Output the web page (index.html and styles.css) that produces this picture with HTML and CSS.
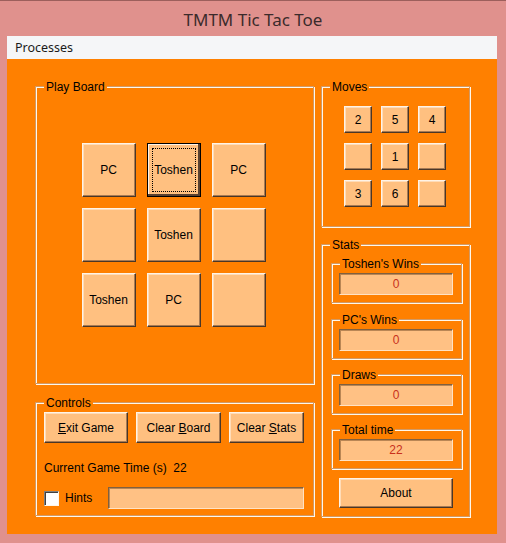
FILE: index.html
```html
<!DOCTYPE html>
<html lang="en">
<head>
<meta charset="utf-8">
<title>TMTM Tic Tac Toe</title>
<link rel="stylesheet" href="styles.css">
</head>
<body>
<div class="window">
  <div class="titlebar">TMTM Tic Tac Toe</div>
  <div class="frame">
    <div class="menubar"><span class="menu-item">Processes</span></div>
    <div class="client">
      <div class="col col-left">
        <div class="group board-group">
          <span class="group-label">Play Board</span>
          <div class="group-body centered">
            <div class="board">
              <button class="btn cell">PC</button>
              <button class="btn cell focused"><span class="focus-rect">Toshen</span></button>
              <button class="btn cell">PC</button>
              <button class="btn cell"></button>
              <button class="btn cell">Toshen</button>
              <button class="btn cell"></button>
              <button class="btn cell">Toshen</button>
              <button class="btn cell">PC</button>
              <button class="btn cell"></button>
            </div>
          </div>
        </div>
        <div class="group controls-group">
          <span class="group-label">Controls</span>
          <div class="controls">
            <div class="control-buttons">
              <button class="btn ctl ctl-exit"><span><u>E</u>xit Game</span></button>
              <button class="btn ctl ctl-board"><span>Clear <u>B</u>oard</span></button>
              <button class="btn ctl ctl-stats"><span>Clear <u>S</u>tats</span></button>
            </div>
            <div class="game-time">Current Game Time (s)&nbsp; 22</div>
            <div class="hints-row">
              <span class="checkbox"></span>
              <span class="hints-label">Hints</span>
              <div class="field hint-field"></div>
            </div>
          </div>
        </div>
      </div>
      <div class="col col-right">
        <div class="group moves-group">
          <span class="group-label">Moves</span>
          <div class="group-body centered">
            <div class="moves">
              <button class="btn move">2</button>
              <button class="btn move">5</button>
              <button class="btn move">4</button>
              <button class="btn move"></button>
              <button class="btn move">1</button>
              <button class="btn move"></button>
              <button class="btn move">3</button>
              <button class="btn move">6</button>
              <button class="btn move"></button>
            </div>
          </div>
        </div>
        <div class="group stats-group">
          <span class="group-label">Stats</span>
          <div class="stats">
            <div class="group sub-group sub-first">
              <span class="group-label">Toshen's Wins</span>
              <div class="field stat-field">0</div>
            </div>
            <div class="group sub-group sub-second">
              <span class="group-label">PC's Wins</span>
              <div class="field stat-field">0</div>
            </div>
            <div class="group sub-group">
              <span class="group-label">Draws</span>
              <div class="field stat-field">0</div>
            </div>
            <div class="group sub-group">
              <span class="group-label">Total time</span>
              <div class="field stat-field">22</div>
            </div>
            <button class="btn about">About</button>
          </div>
        </div>
      </div>
    </div>
  </div>
</div>
</body>
</html>
```
FILE: styles.css
```css
* {
  box-sizing: border-box;
}

html, body {
  margin: 0;
  padding: 0;
}

body {
  width: 506px;
  height: 543px;
  overflow: hidden;
  background: #e0918d;
  font-family: "Liberation Sans", Arial, sans-serif;
  font-size: 12px;
  color: #000;
}

.window {
  width: 506px;
  height: 543px;
  border-top: 1px solid #9c5f5c;
}

/* title bar */
.titlebar {
  height: 35px;
  display: flex;
  align-items: center;
  justify-content: center;
  padding-top: 1px;
  font-family: "Noto Sans", "Open Sans", sans-serif;
  font-size: 17px;
  color: #3b2b2b;
}

.frame {
  padding: 0 9px 9px 7px;
}

/* menu */
.menubar {
  height: 23px;
  background: #f5f6f8;
  display: flex;
  align-items: center;
  padding-left: 8px;
}

.menu-item {
  font-family: "Noto Sans", "Open Sans", sans-serif;
  font-size: 12.5px;
  color: #1a1a1a;
}

/* client area */
.client {
  height: 475px;
  background: #ff8000;
  display: flex;
  gap: 7px;
  padding-left: 28px;
}

.col {
  display: flex;
  flex-direction: column;
}

.col-left {
  width: 279px;
}

.col-right {
  width: 149px;
}

/* etched group boxes */
.group {
  display: flex;
  flex-direction: column;
  border: 1px solid #d29a66;
  box-shadow: inset 1px 1px 0 #fff7ea, 1px 1px 0 #fff7ea;
}

.group-label {
  align-self: flex-start;
  height: 14px;
  line-height: 14px;
  margin: -7px 0 -7px 8px;
  padding: 0 2px;
  background: #ff8000;
  white-space: nowrap;
}

.group-body {
  flex: 1;
}

.centered {
  display: flex;
  align-items: center;
  justify-content: center;
}

.board-group {
  margin-top: 27px;
  height: 298px;
}

.controls-group {
  margin-top: 18px;
  height: 114px;
}

.moves-group {
  margin-top: 27px;
  height: 141px;
}

.stats-group {
  margin-top: 17px;
  height: 273px;
}

/* raised peach buttons */
.btn {
  margin: 0;
  padding: 0;
  font-family: "Liberation Sans", Arial, sans-serif;
  font-size: 12px;
  color: #000;
  background: #ffc080;
  border: 1px solid;
  border-color: #fff3e6 #4a3626 #4a3626 #fff3e6;
  box-shadow: inset -1px -1px 0 #a57a55, inset 1px 1px 0 #ffdcb8;
  display: flex;
  align-items: center;
  justify-content: center;
  white-space: nowrap;
  cursor: default;
}

.board {
  display: grid;
  grid-template-columns: repeat(3, 54px);
  grid-auto-rows: 54px;
  gap: 11px;
  margin-left: -2px;
}

.cell.focused {
  border: 1px solid #000;
  box-shadow: inset -2px -2px 0 #5a4130, inset 1px 1px 0 #fff3e6;
  padding: 4px;
}

.focus-rect {
  flex: 1;
  align-self: stretch;
  display: flex;
  align-items: center;
  justify-content: center;
  border: 1px dotted #000;
}

.moves {
  display: grid;
  grid-template-columns: repeat(3, 28px);
  grid-auto-rows: 27px;
  column-gap: 9px;
  row-gap: 10px;
  margin-left: -1px;
}

/* controls panel */
.controls {
  padding: 9px 0 0 8px;
}

.control-buttons {
  display: flex;
  gap: 8px;
}

.ctl {
  height: 31px;
}

.ctl-exit {
  width: 84px;
}

.ctl-board {
  width: 85px;
}

.ctl-stats {
  width: 75px;
}

.game-time {
  margin-top: 18px;
  height: 14px;
  line-height: 14px;
}

.hints-row {
  margin-top: 12px;
  display: flex;
  align-items: center;
}

.checkbox {
  width: 15px;
  height: 15px;
  background: #fff;
  border: 1px solid;
  border-color: #808080 #fff7ea #fff7ea #808080;
  box-shadow: inset 1px 1px 0 #404040;
}

.hints-label {
  margin-left: 6px;
  width: 43px;
}

/* sunken fields */
.field {
  background: #ffc184;
  border: 1px solid;
  border-color: #80603f #ffe2c4 #ffe2c4 #80603f;
  box-shadow: inset 1px 1px 0 #b98655;
  display: flex;
  align-items: center;
  justify-content: center;
  color: #c8301c;
}

.hint-field {
  width: 196px;
  height: 22px;
}

/* stats panel */
.stats {
  display: flex;
  flex-direction: column;
  padding-left: 9px;
}

.sub-group {
  width: 131px;
  height: 40px;
  margin-top: 15px;
}

.sub-first {
  margin-top: 18px;
}

.sub-second {
  margin-top: 16px;
}

.stat-field {
  width: 114px;
  height: 22px;
  margin: 9px 0 0 7px;
}

.about {
  width: 114px;
  height: 30px;
  margin: 9px 0 0 8px;
}
```
